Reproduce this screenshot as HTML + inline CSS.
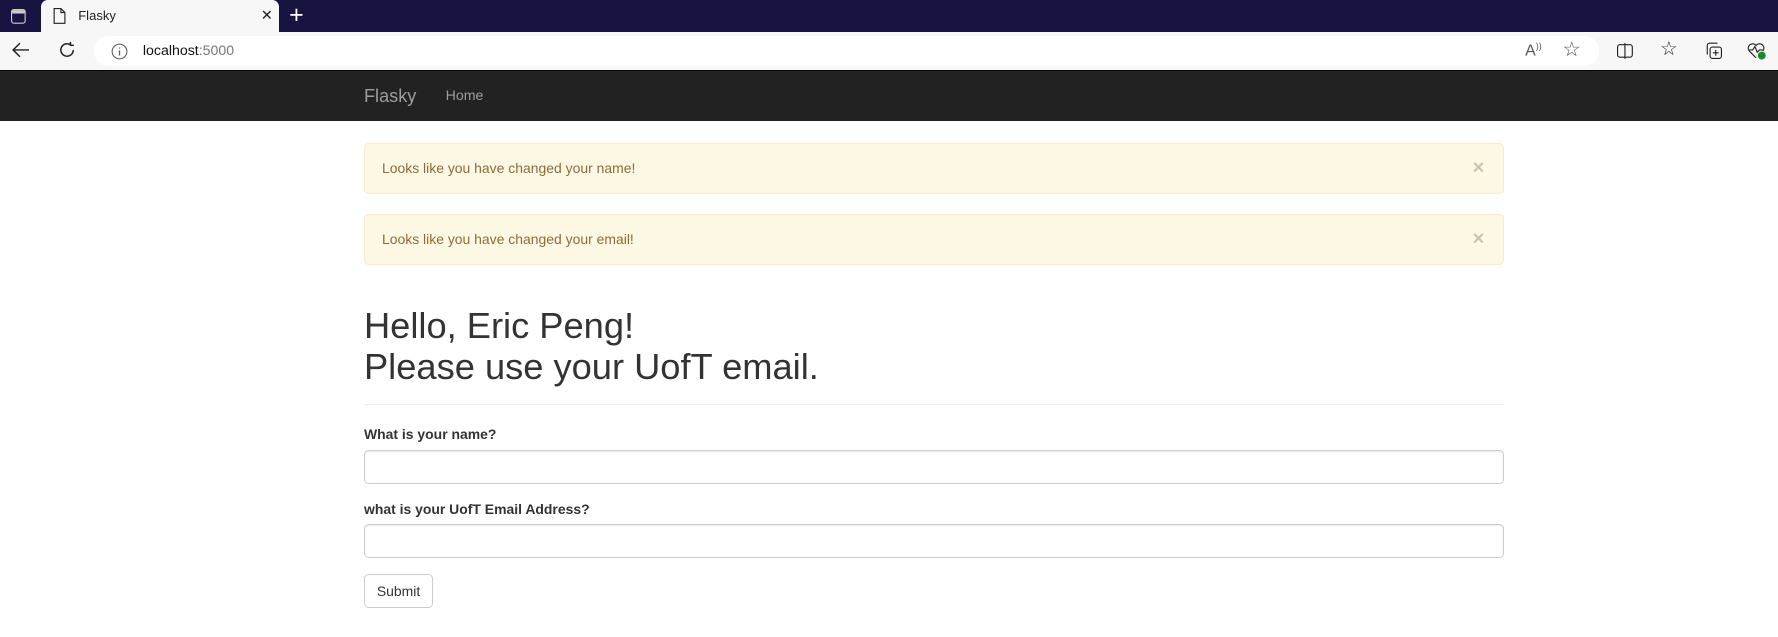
<!DOCTYPE html>
<html><head><meta charset="utf-8"><style>
html,body{margin:0;padding:0;overflow:hidden;background:#fff}
#root{width:1568px;height:562px;zoom:1.13393;position:relative;font-family:"Liberation Sans",Arial,sans-serif;color:#333}
.tabbar{position:absolute;left:0;top:0;width:1568px;height:28px;background:#171442}
.tab{position:absolute;left:36px;top:0;width:210px;height:28px;background:#f7f7f7;border-radius:6px 6px 0 0;font-size:11.5px;color:#222}
.toolbar{position:absolute;left:0;top:28px;width:1568px;height:34px;background:#f7f7f7}
.addr{position:absolute;left:83px;top:4px;width:1327px;height:26px;background:#fff;border-radius:13px}
.nav{position:absolute;left:0;top:62px;width:1568px;height:45px;background:#222;border-top:1px solid #080808;box-sizing:border-box}
.c{position:absolute;left:321px;width:1005px}
.alert{background:#fcf8e3;border:1px solid #faebcc;color:#8a6d3b;border-radius:4px;box-sizing:border-box;height:45px;padding:0 15px;font-size:12.3px;line-height:44px}
.alert .x{position:absolute;right:16px;top:0;font-weight:bold;font-size:18px;color:#000;opacity:.2}
h1{margin:0;font-weight:normal;font-size:32px;line-height:36px;color:#333}
label{font-weight:bold;font-size:12.3px;display:block}
.inp{height:30px;border:1px solid #ccc;border-radius:4px;box-sizing:border-box;box-shadow:inset 0 1px 1px rgba(0,0,0,.075)}
.btn{width:61px;height:30px;border:1px solid #ccc;border-radius:4px;box-sizing:border-box;font-size:12.3px;text-align:center;line-height:29px}
svg{position:absolute}
</style></head><body><div id="root">
<div class="tabbar">
<svg style="left:10px;top:8px" width="13" height="13" viewBox="0 0 13 13"><rect x="0.5" y="0.5" width="12" height="12" rx="2" fill="none" stroke="#ccc"/><rect x="1" y="1" width="11" height="3" fill="#ccc"/></svg>
<div class="tab">
<svg style="left:11px;top:7px" width="11" height="14" viewBox="0 0 11 14"><path d="M1 .5h6l3.5 3.5v9.5h-9.5z M7 .5v3.5h3.5" fill="none" stroke="#222"/></svg>
<span style="position:absolute;left:33px;top:7px">Flasky</span>
<span style="position:absolute;left:194px;top:6px;font-size:13px">✕</span>
</div>
<span style="position:absolute;left:255px;top:1px;color:#fff;font-size:22px;font-weight:300">+</span>
</div>
<div class="toolbar">
<svg style="left:11px;top:9px" width="16" height="14" viewBox="0 0 16 14"><path d="M15 7H1M7 1L1 7l6 6" fill="none" stroke="#222" stroke-width="1.3"/></svg>
<svg style="left:51px;top:8px" width="16" height="16" viewBox="0 0 16 16"><path d="M13.5 8A5.5 5.5 0 1 1 11 3.3M11 .8v3h3" fill="none" stroke="#222" stroke-width="1.3"/></svg>
<div class="addr">
<svg style="left:15px;top:6px" width="15" height="15" viewBox="0 0 15 15"><circle cx="7.5" cy="7.5" r="6.5" fill="none" stroke="#666"/><path d="M7.5 6.5v4.5M7.5 4v1" stroke="#666" stroke-width="1.2"/></svg>
<span style="position:absolute;left:43px;top:6px;font-size:12.5px;color:#111">localhost<span style="color:#777">:5000</span></span>
<span style="position:absolute;left:1262px;top:4px;font-size:14px;color:#555">A<sup style="font-size:8px">))</sup></span>
<span style="position:absolute;left:1295px;top:1px;font-size:18px;color:#555">☆</span>
</div>
<svg style="left:1426px;top:10px" width="14" height="14" viewBox="0 0 14 14"><rect x=".5" y="1.5" width="13" height="11" rx="2" fill="none" stroke="#222"/><path d="M7 0v14" stroke="#222"/></svg>
<span style="position:absolute;left:1464px;top:5px;font-size:17px;color:#222">☆</span>
<svg style="left:1504px;top:9px" width="16" height="16" viewBox="0 0 16 16"><rect x="4.5" y="4.5" width="10" height="10" rx="2" fill="none" stroke="#222"/><path d="M9.5 7v5M7 9.5h5M2 11V3a2 2 0 0 1 2-2h7" fill="none" stroke="#222"/></svg>
<svg style="left:1541px;top:9px" width="18" height="16" viewBox="0 0 18 16"><path d="M8 14L2 8a3.5 3.5 0 0 1 6-5 3.5 3.5 0 0 1 6 5M2 7h3l2-3 2 5 2-2h3" fill="none" stroke="#222"/><circle cx="13" cy="12" r="3.5" fill="#1a8a2e"/></svg>
</div>
<div class="nav">
<span style="position:absolute;left:321px;top:13px;font-size:16px;color:#9d9d9d">Flasky</span>
<span style="position:absolute;left:393px;top:15px;font-size:12.5px;color:#9d9d9d">Home</span>
</div>
<div class="c alert" style="top:126px">Looks like you have changed your name!<span class="x">×</span></div>
<div class="c alert" style="top:189px">Looks like you have changed your email!<span class="x">×</span></div>
<div class="c" style="top:270px"><h1>Hello, Eric Peng!<br>Please use your UofT email.</h1></div>
<div class="c" style="top:356px;border-top:1px solid #eee"></div>
<div class="c" style="top:376px"><label>What is your name?</label></div>
<div class="c inp" style="top:397px"></div>
<div class="c" style="top:442px"><label>what is your UofT Email Address?</label></div>
<div class="c inp" style="top:462px"></div>
<div class="c btn" style="top:506px;width:61px">Submit</div>
</div></body></html>
